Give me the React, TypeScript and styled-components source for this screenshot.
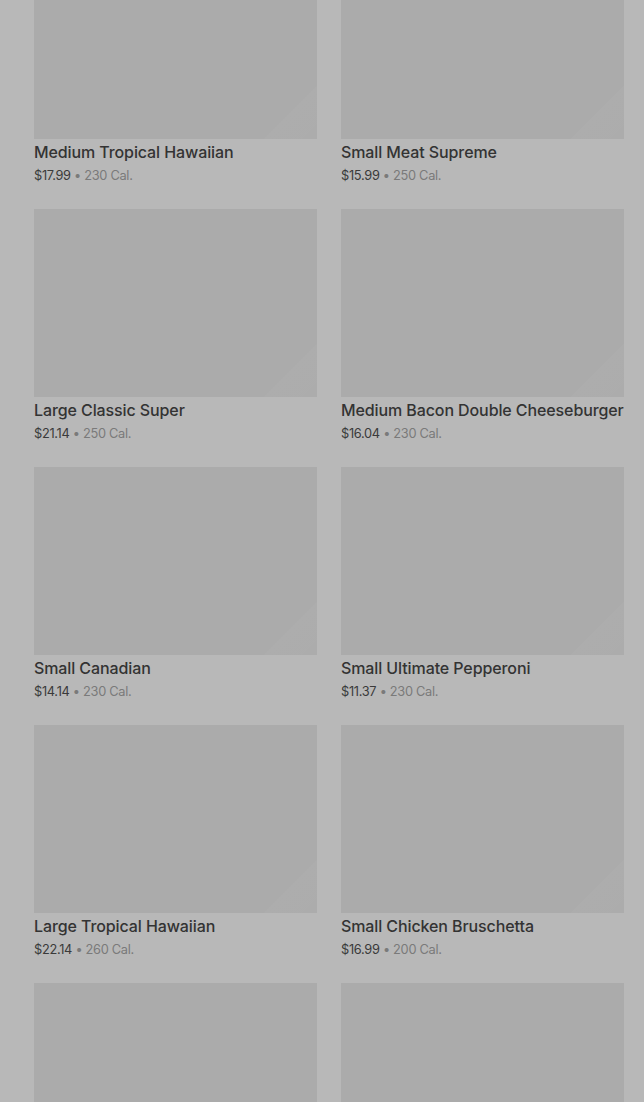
import React from "react";
import styled, { createGlobalStyle } from "styled-components";

const Global = createGlobalStyle`
  html, body { margin: 0; padding: 0; background: #b8b8b8; overflow: hidden; }
  body { font-family: Inter, "Noto Sans", Arial, sans-serif; }
`;

const Page = styled.div`
  width: 644px;
  height: 1102px;
  overflow: hidden;
  background: #b8b8b8;
  box-sizing: border-box;
  padding: 0 20px 0 34px;
`;

const Grid = styled.div`
  display: grid;
  grid-template-columns: 283px 283px;
  column-gap: 24px;
  row-gap: 23px;
  margin-top: -49px;
`;

const Card = styled.div`
  display: flex;
  flex-direction: column;
  min-width: 0;
`;

const Thumb = styled.div`
  height: 188px;
  background: #ababab;
  position: relative;
  overflow: hidden;
  &::after {
    content: "";
    position: absolute;
    right: 0;
    bottom: 0;
    width: 60px;
    height: 60px;
    background: linear-gradient(135deg, transparent 55%, rgba(255,255,255,0.025) 56%, rgba(255,255,255,0.015) 100%);
  }
`;

const Title = styled.div`
  margin-top: 3px;
  font-size: 16px;
  line-height: 20px;
  font-weight: 500;
  color: #333333;
  white-space: nowrap;
  letter-spacing: -0.1px;
`;

const Meta = styled.div`
  margin-top: 4px;
  font-size: 12.8px;
  line-height: 20px;
  color: #3a3a3a;
  letter-spacing: -0.3px;
`;

const Cal = styled.span`
  color: #7a7a7a;
`;

const items = [
  { name: "Medium Tropical Hawaiian", price: "$17.99", cal: "230 Cal." },
  { name: "Small Meat Supreme", price: "$15.99", cal: "250 Cal." },
  { name: "Large Classic Super", price: "$21.14", cal: "250 Cal." },
  { name: "Medium Bacon Double Cheeseburger", price: "$16.04", cal: "230 Cal." },
  { name: "Small Canadian", price: "$14.14", cal: "230 Cal." },
  { name: "Small Ultimate Pepperoni", price: "$11.37", cal: "230 Cal." },
  { name: "Large Tropical Hawaiian", price: "$22.14", cal: "260 Cal." },
  { name: "Small Chicken Bruschetta", price: "$16.99", cal: "200 Cal." },
  { name: "", price: "", cal: "" },
  { name: "", price: "", cal: "" },
];

export default function App() {
  return (
    <>
      <Global />
      <Page>
        <Grid>
          {items.map((it, i) => (
            <Card key={i}>
              <Thumb />
              {it.name && <Title>{it.name}</Title>}
              {it.price && (
                <Meta>
                  {it.price} <Cal>• {it.cal}</Cal>
                </Meta>
              )}
            </Card>
          ))}
        </Grid>
      </Page>
    </>
  );
}
